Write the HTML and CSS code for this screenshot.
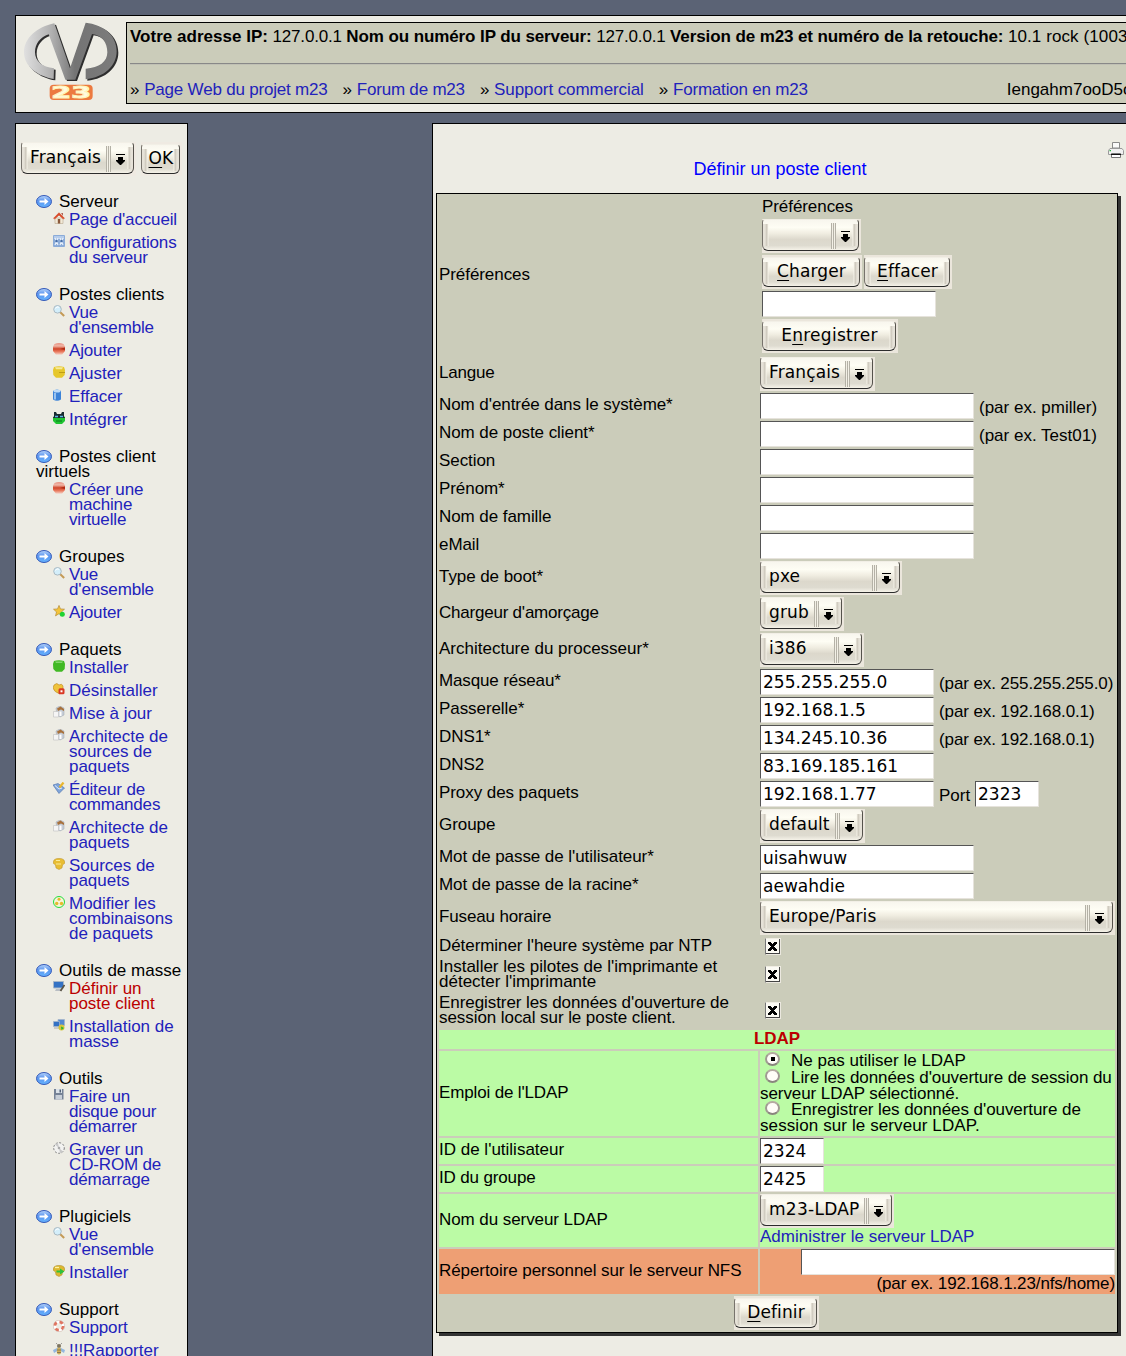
FILE: index.html
```html
<!DOCTYPE html>
<html lang="fr">
<head>
<meta charset="utf-8">
<title>m23 - Définir un poste client</title>
<link rel="stylesheet" href="styles.css">
</head>
<body>
<svg class="defs" width="0" height="0" aria-hidden="true">
  <defs>
    <linearGradient id="g-blue" x1="0" y1="0" x2="0" y2="1"><stop offset="0" stop-color="#b8d6fb"/><stop offset=".45" stop-color="#5b94ee"/><stop offset="1" stop-color="#64b4ff"/></linearGradient>
    <linearGradient id="g-red" x1="0" y1="0" x2="0" y2="1"><stop offset="0" stop-color="#e89080"/><stop offset=".25" stop-color="#f0b8a8"/><stop offset=".5" stop-color="#d04428"/><stop offset=".75" stop-color="#ea7c60"/><stop offset="1" stop-color="#f4d4c8"/></linearGradient>
    <linearGradient id="g-gray" x1="0" y1="0" x2="1" y2="0"><stop offset="0" stop-color="#e0e0e0"/><stop offset=".3" stop-color="#b0b0b0"/><stop offset=".55" stop-color="#747474"/><stop offset="1" stop-color="#7c7c7c"/></linearGradient>
    <symbol id="i-arrow" viewBox="0 0 16 13"><ellipse cx="8" cy="6.5" rx="7.5" ry="6" fill="url(#g-blue)" stroke="#3459b8"/><path d="M3.500 5.500h5V3l4 3.500-4 3.500V7.500h-5z" fill="#fff"/></symbol>
    <symbol id="i-home" viewBox="0 0 12 12"><path d="M2 6h8v5.500H2z" fill="#f2ead8" stroke="#b8aa90" stroke-width=".6"/><path d="M.6 6.300 6 .8l5.400 5.500-1.200.5L6 3 1.800 6.800z" fill="#d84a2a" stroke="#d84a2a" stroke-width=".7"/><path d="M8.200 1h1.600v3z" fill="#a04030"/><path d="M4.800 7h2.400v4.500H4.800z" fill="#8a5a3c"/></symbol>
    <symbol id="i-config" viewBox="0 0 12 12"><rect width="12" height="12" rx="1" fill="#8aabd8"/><path d="M1 1h10v3H1z" fill="#b5cceb"/><path d="m2 3 3 7M7 3l3 7M5 3 2 10M10 3 7 10" stroke="#e9f1fb" stroke-width="1.200"/><circle cx="3.500" cy="6" r="1.200" fill="#456da8"/><circle cx="8.500" cy="6" r="1.200" fill="#456da8"/></symbol>
    <symbol id="i-lens" viewBox="0 0 12 12"><path d="m7 7 4.200 4" stroke="#c49a55" stroke-width="2"/><circle cx="4.500" cy="4.300" r="3.800" fill="#d3eefa" stroke="#a9b9c2"/><path d="M2.500 3.600a2.500 2.500 0 0 1 3.500-1.400" stroke="#fff" fill="none"/></symbol>
    <symbol id="i-red" viewBox="0 0 12 12"><path d="M1.500 1Q6-1 10.500 1L12 3.500v4.500l-3 3.700H3L0 8V3.500z" fill="url(#g-red)"/><path d="m7 6 5-1.500V7z" fill="#b02c14"/></symbol>
    <symbol id="i-yellow" viewBox="0 0 12 12"><path d="M1 1Q6-.6 11 1l1 3-.3 5L9 11.700H3L.3 9 0 4z" fill="#e6c72c"/><path d="M2 1.200h8l-1 2H3z" fill="#f6ea98"/><path d="M6 6.500h6" stroke="#bf9d17"/></symbol>
    <symbol id="i-blue" viewBox="0 0 12 12"><path d="M0 2q4-3 8 0v8.500q-4 2.500-8 0z" fill="#3c83d8"/><ellipse cx="4" cy="2" rx="3.500" ry="1.500" fill="#bfdcf8"/><path d="M2 4v6.500" stroke="#b8d8f8" stroke-width="1.500"/></symbol>
    <symbol id="i-monster" viewBox="0 0 12 12"><path d="M0 5h12v4l-3 3H3L0 9z" fill="#1fc431"/><path d="M1 0h2l1 2h4l1-2h2v4l1 2H0l1-2z" fill="#172b30"/><path d="M2 4.500h3M7 4.500h3" stroke="#5db9e6" stroke-width="1.300"/><path d="M3 9h6" stroke="#0d771b"/></symbol>
    <symbol id="i-star" viewBox="0 0 12 12"><path d="m6 .4 1.500 3.500 4 .3-3 2.600 1 4L6 8.700l-3.500 2.200 1-4L.5 4.200l4-.3z" fill="#f3c43b" stroke="#ad822a" stroke-width=".6"/><circle cx="9.300" cy="9.200" r="2.500" fill="#20d333"/></symbol>
    <symbol id="i-green" viewBox="0 0 12 12"><path d="M1 1Q6-.6 11 1l1 3-.3 5L9 11.700H3L.3 9 0 4z" fill="#41b924"/><path d="M2 1.500h8l-1 1.500H3z" fill="#83d56d"/></symbol>
    <symbol id="i-uninstall" viewBox="0 0 12 12"><path d="M1 2q3-3 5 0 3-2 4 1v4L7 11Q1 9 0 5z" fill="#efc33b" stroke="#b98523" stroke-width=".6"/><rect x="5.500" y="5.300" width="6" height="6" rx="1.500" fill="#d93824"/><path d="M7.500 7.300h2v2h-2z" fill="#fff"/></symbol>
    <symbol id="i-package" viewBox="0 0 12 12"><path d="M3 2 7 0l4 2v7l-4 2-3-2z" fill="#c5ccd6" stroke="#9ca4ae" stroke-width=".5"/><path d="M4 2.500 7.500.6 11 3v2L8 3.500 5 5z" fill="#a8713b"/><path d="M.5 5.500h5v5.500H.5z" fill="#f5f5f5" stroke="#c0c0c0" stroke-width=".6"/><path d="M6.500 5.500h2V10h-2z" fill="#fff"/></symbol>
    <symbol id="i-edit" viewBox="0 0 12 12"><path d="M0 3 5 1.500 11.500 6 6 11.500z" fill="#7fa5da" stroke="#496da7" stroke-width=".6"/><path d="M2 3.500 6 7l3-1" stroke="#dceaff" fill="none"/><path d="M10.500.5 6.500 5.500" stroke="#e9b52c" stroke-width="2.200"/></symbol>
    <symbol id="i-shield" viewBox="0 0 12 12"><path d="M1 2q2-2 5-1.500Q9 0 11 2l1 3-2.500 2L9 10l-3 1.500L3 10l-.5-3L0 5z" fill="#e8bd33" stroke="#b88e25" stroke-width=".5"/><path d="M3 2.500h4M3 6h5" stroke="#faec9a" stroke-width="1.200"/></symbol>
    <symbol id="i-combo" viewBox="0 0 12 12"><circle cx="6" cy="6" r="5.500" fill="#f6f4da" stroke="#23dd3b"/><circle cx="6" cy="3.300" r="1.500" fill="#e5b92c"/><circle cx="3.700" cy="7.500" r="1.700" fill="#e5b92c"/><circle cx="8.500" cy="7.500" r="1.700" fill="#e5b92c"/></symbol>
    <symbol id="i-pcedit" viewBox="0 0 12 12"><path d="M.5.5h10v6.500H.5z" fill="#3472c4" stroke="#a7b6c7"/><path d="M3 8h5l1 2H2z" fill="#b9bec4"/><path d="m11.500 4-4 6" stroke="#5c5548" stroke-width="1.800"/></symbol>
    <symbol id="i-pcinst" viewBox="0 0 12 12"><path d="M5 .5h6.500v6H5z" fill="#5289d1" stroke="#a3b5ca" stroke-width=".8"/><path d="M.5 2.500h6v5h-6z" fill="#3472c4" stroke="#a3b5ca" stroke-width=".8"/><path d="M1 9h5" stroke="#aaa"/><circle cx="8.500" cy="8.500" r="3" fill="#d7c53a"/><path d="M8 7.500 11 9l-2.500 2z" fill="#25b531"/></symbol>
    <symbol id="i-floppy" viewBox="0 0 12 12"><path d="M1 0h9.500v10.500H1z" fill="#758296"/><path d="M3 0h6v4H3z" fill="#dbe2e9"/><path d="M2.500 6H9v4.500H2.500z" fill="#c8cfd8"/><path d="M6.500.5h1.500v3H6.500z" fill="#526078"/></symbol>
    <symbol id="i-cd" viewBox="0 0 12 12"><circle cx="6" cy="6" r="5.300" fill="#f2f2f0" stroke="#7e7e7e" stroke-dasharray="2 1.500"/><path d="M6 6 2 2.500A5 5 0 0 1 5 1zM6 6l4 3.500A5 5 0 0 1 7 11z" fill="#c8c8c8"/><circle cx="6" cy="6" r="1.300" fill="#aaa"/></symbol>
    <symbol id="i-plugin" viewBox="0 0 12 12"><path d="M1 2q2-2 5-1.500Q9 0 11 2l1 3-2.500 2L9 10l-3 1.500L3 10l-.5-3L0 5z" fill="#ddb830" stroke="#a98626" stroke-width=".5"/><path d="M2 2.500h4" stroke="#fff3a5" stroke-width="1.300"/><path d="M3.500 5.500h3.500v-2l4.500 3-4.500 3v-2H3.500z" fill="#2fc13b"/></symbol>
    <symbol id="i-support" viewBox="0 0 12 12"><circle cx="6" cy="6" r="4.200" fill="none" stroke="#fff" stroke-width="3"/><circle cx="6" cy="6" r="4.200" fill="none" stroke="#e07460" stroke-width="2.800" stroke-dasharray="3.600 3"/><circle cx="6" cy="6" r="5.700" fill="none" stroke="#c9aaa0" stroke-width=".5"/></symbol>
    <symbol id="i-bug" viewBox="0 0 12 12"><path d="M6 4 0 7l1 3 5-3 5 3 1-3z" fill="#93b7df"/><ellipse cx="6" cy="3" rx="2" ry="2" fill="#7c745e"/><ellipse cx="6" cy="8" rx="2.200" ry="3.600" fill="#d4b058"/><path d="M4 7h4M4 9.500h4" stroke="#8a7a50"/><path d="M4.500 1.500 3 0M7.500 1.500 9 0" stroke="#777" stroke-width=".7"/></symbol>
    <symbol id="i-drop" viewBox="0 0 9 11"><path d="M0 0h9v1H0zM2 3h5v3h2v1L5 11H4L0 7V6h2z" fill="#000"/></symbol>
    <symbol id="i-check" viewBox="0 0 9 9"><path d="M0 0h3v1h1v1h1V1h1V0h3v2H8v1H7v1H6v1h1v1h1v1h1v2H6V8H5V7H4v1H3v1H0V7h1V6h1V5h1V4H2V3H1V2H0z" fill="#000"/></symbol>
  </defs>
</svg>

<div class="page">
  <header class="top">
    <svg class="logo" viewBox="66 66 294 246" width="98" height="82" role="img" aria-label="m23">
      <path transform="translate(5 4)" fill="#2e2e2e" d="M160 70C108 80 69 115 69 157c0 44 44 73 89 80l1-32c-36-4-57-22-57-48 0-26 16-45 41-54l50 136h30l50-137c30 3 46 26 46 55 0 28-24 47-65 49v32c56-6 93-40 93-84 0-50-41-80-93-86l-47 137z"/>
      <path fill="url(#g-gray)" d="M160 70C108 80 69 115 69 157c0 44 44 73 89 80l1-32c-36-4-57-22-57-48 0-26 16-45 41-54l50 136h30l50-137c30 3 46 26 46 55 0 28-24 47-65 49v32c56-6 93-40 93-84 0-50-41-80-93-86l-47 137z"/>
      <rect x="146" y="254" width="129" height="46" rx="12" fill="#ec7a40"/>
      <text class="logo-num" x="151" y="295" textLength="119" lengthAdjust="spacingAndGlyphs">23</text>
    </svg>
    <div class="info">
      <p class="info-line"><b class="ip">Votre adresse IP:</b> 127.0.0.1 <b>Nom ou numéro IP du serveur:</b> 127.0.0.1 <b>Version de m23 et numéro de la retouche:</b> <span class="version">10.1 rock (1003)</span></p>
      <div class="rule"></div>
      <div class="links">
        <span>» <a>Page Web du projet m23</a></span><span>» <a>Forum de m23</a></span><span>» <a class="wide">Support commercial</a></span><span>» <a>Formation en m23</a></span>
        <span class="token">Iengahm7ooD5o</span>
      </div>
    </div>
  </header>

  <div class="columns">
    <nav class="side">
      <div class="lang">
        <div class="ctl select w115"><span>Français</span><i class="grip"></i><svg class="drop"><use href="#i-drop"/></svg></div>
        <div class="ctl btn w41"><span><u>O</u>K</span></div>
      </div>
      <section><h2><svg><use href="#i-arrow"/></svg>Serveur</h2>
        <a class="tight"><svg><use href="#i-home"/></svg>Page d'accueil</a>
        <a class="tight"><svg><use href="#i-config"/></svg>Configurations<br>du serveur</a></section>
      <section><h2><svg><use href="#i-arrow"/></svg>Postes clients</h2>
        <a class="tight"><svg><use href="#i-lens"/></svg>Vue<br>d'ensemble</a>
        <a class="tight"><svg><use href="#i-red"/></svg>Ajouter</a>
        <a><svg><use href="#i-yellow"/></svg>Ajuster</a>
        <a><svg><use href="#i-blue"/></svg>Effacer</a>
        <a><svg><use href="#i-monster"/></svg>Intégrer</a></section>
      <section><h2><svg><use href="#i-arrow"/></svg>Postes client<br>virtuels</h2>
        <a class="tight"><svg><use href="#i-red"/></svg>Créer une<br>machine<br>virtuelle</a></section>
      <section><h2><svg><use href="#i-arrow"/></svg>Groupes</h2>
        <a class="tight"><svg><use href="#i-lens"/></svg>Vue<br>d'ensemble</a>
        <a class="tight"><svg><use href="#i-star"/></svg>Ajouter</a></section>
      <section><h2><svg><use href="#i-arrow"/></svg>Paquets</h2>
        <a><svg><use href="#i-green"/></svg>Installer</a>
        <a><svg><use href="#i-uninstall"/></svg>Désinstaller</a>
        <a><svg><use href="#i-package"/></svg>Mise à jour</a>
        <a><svg><use href="#i-package"/></svg>Architecte de<br>sources de<br>paquets</a>
        <a class="tight"><svg><use href="#i-edit"/></svg>Éditeur de<br>commandes</a>
        <a><svg><use href="#i-package"/></svg>Architecte de<br>paquets</a>
        <a><svg><use href="#i-shield"/></svg>Sources de<br>paquets</a>
        <a><svg><use href="#i-combo"/></svg>Modifier les<br>combinaisons<br>de paquets</a></section>
      <section><h2><svg><use href="#i-arrow"/></svg>Outils de masse</h2>
        <a class="current"><svg><use href="#i-pcedit"/></svg>Définir un<br>poste client</a>
        <a><svg><use href="#i-pcinst"/></svg>Installation de<br>masse</a></section>
      <section><h2><svg><use href="#i-arrow"/></svg>Outils</h2>
        <a class="tight"><svg><use href="#i-floppy"/></svg>Faire un<br>disque pour<br>démarrer</a>
        <a class="tight"><svg><use href="#i-cd"/></svg>Graver un<br>CD-ROM de<br>démarrage</a></section>
      <section><h2><svg><use href="#i-arrow"/></svg>Plugiciels</h2>
        <a class="tight"><svg><use href="#i-lens"/></svg>Vue<br>d'ensemble</a>
        <a><svg><use href="#i-plugin"/></svg>Installer</a></section>
      <section><h2><svg><use href="#i-arrow"/></svg>Support</h2>
        <a class="tight"><svg><use href="#i-support"/></svg>Support</a>
        <a><svg><use href="#i-bug"/></svg>!!!Rapporter</a></section>
    </nav>

    <main class="main">
      <div class="print">
        <svg width="16" height="16" viewBox="0 0 16 16"><path d="M4.500.5h7V6h-7z" fill="#fafafa" stroke="#8a8a8a"/><path d="M2 6.500h12l1.500 2v4H.5v-4z" fill="#f1f1f1" stroke="#9a9a9a"/><path d="M3.500 11.500h9v4h-9z" fill="#fff" stroke="#777"/><path d="M3 12.500h10" stroke="#111"/><path d="M1.500 8h1.500v1.200H1.500z" fill="#27b33a"/></svg>
      </div>
      <h1>Définir un poste client</h1>

      <div class="form">
        <div class="row prefs">
          <div class="label">Préférences</div>
          <div class="stack">
            <p>Préférences</p>
            <div class="ctl select w99"><span></span><i class="grip"></i><svg class="drop"><use href="#i-drop"/></svg></div>
            <div class="pair"><div class="ctl btn w100"><span><u>C</u>harger</span></div><div class="ctl btn w88"><span><u>E</u>ffacer</span></div></div>
            <input class="w174" type="text">
            <div class="ctl btn loose w136"><span>E<u>n</u>registrer</span></div>
          </div>
        </div>
        <div class="row sel"><div class="label tighter">Langue</div><div class="field"><div class="ctl select w115"><span>Français</span><i class="grip"></i><svg class="drop"><use href="#i-drop"/></svg></div></div></div>
        <div class="row"><div class="label">Nom d'entrée dans le système*</div><div class="field"><input class="w214" type="text"><em class="wide">(par ex. pmiller)</em></div></div>
        <div class="row"><div class="label">Nom de poste client*</div><div class="field"><input class="w214" type="text"><em class="wide">(par ex. Test01)</em></div></div>
        <div class="row"><div class="label">Section</div><div class="field"><input class="w214" type="text"></div></div>
        <div class="row"><div class="label">Prénom*</div><div class="field"><input class="w214" type="text"></div></div>
        <div class="row"><div class="label">Nom de famille</div><div class="field"><input class="w214" type="text"></div></div>
        <div class="row"><div class="label">eMail</div><div class="field"><input class="w214" type="text"></div></div>
        <div class="row sel"><div class="label">Type de boot*</div><div class="field"><div class="ctl select w142"><span>pxe</span><i class="grip"></i><svg class="drop"><use href="#i-drop"/></svg></div></div></div>
        <div class="row sel"><div class="label tighter">Chargeur d'amorçage</div><div class="field"><div class="ctl select w84"><span>grub</span><i class="grip"></i><svg class="drop"><use href="#i-drop"/></svg></div></div></div>
        <div class="row sel"><div class="label wide">Architecture du processeur*</div><div class="field"><div class="ctl select w104"><span>i386</span><i class="grip"></i><svg class="drop"><use href="#i-drop"/></svg></div></div></div>
        <div class="row"><div class="label tight">Masque réseau*</div><div class="field"><input class="w174" type="text" value="255.255.255.0"><em>(par ex. 255.255.255.0)</em></div></div>
        <div class="row"><div class="label">Passerelle*</div><div class="field"><input class="w174" type="text" value="192.168.1.5"><em>(par ex. 192.168.0.1)</em></div></div>
        <div class="row"><div class="label">DNS1*</div><div class="field"><input class="w174" type="text" value="134.245.10.36"><em>(par ex. 192.168.0.1)</em></div></div>
        <div class="row"><div class="label">DNS2</div><div class="field"><input class="w174" type="text" value="83.169.185.161"></div></div>
        <div class="row"><div class="label">Proxy des paquets</div><div class="field"><input class="w174" type="text" value="192.168.1.77"><em class="port wide">Port</em><input class="w64" type="text" value="2323"></div></div>
        <div class="row sel"><div class="label">Groupe</div><div class="field"><div class="ctl select w105"><span>default</span><i class="grip"></i><svg class="drop"><use href="#i-drop"/></svg></div></div></div>
        <div class="row"><div class="label">Mot de passe de l'utilisateur*</div><div class="field"><input class="w214" type="text" value="uisahwuw"></div></div>
        <div class="row"><div class="label">Mot de passe de la racine*</div><div class="field"><input class="w214" type="text" value="aewahdie"></div></div>
        <div class="row sel"><div class="label tight">Fuseau horaire</div><div class="field"><div class="ctl select w355"><span>Europe/Paris</span><i class="grip"></i><svg class="drop"><use href="#i-drop"/></svg></div></div></div>
        <div class="row ntp"><div class="label">Déterminer l'heure système par NTP</div><div class="field"><span class="check"><svg><use href="#i-check"/></svg></span></div></div>
        <div class="row two"><div class="label wide">Installer les pilotes de l'imprimante et<br>détecter l'imprimante</div><div class="field"><span class="check"><svg><use href="#i-check"/></svg></span></div></div>
        <div class="row two last"><div class="label"><span>Enregistrer les données d'ouverture de<br>session local sur le poste client.</span></div><div class="field"><span class="check"><svg><use href="#i-check"/></svg></span></div></div>
        <div class="ldap-head">LDAP</div>
        <div class="row green usage"><div class="label tight">Emploi de l'LDAP</div>
          <div class="radios">
            <p class="first wide"><span class="radio on"></span>Ne pas utiliser le LDAP</p>
            <p><span class="radio"></span>Lire les données d'ouverture de session du</p>
            <p>serveur LDAP sélectionné.</p>
            <p><span class="radio"></span>Enregistrer les données d'ouverture de</p>
            <p class="loose">session sur le serveur LDAP.</p>
          </div></div>
        <div class="row green"><div class="label wide">ID de l'utilisateur</div><div class="field"><input class="w64" type="text" value="2324"></div></div>
        <div class="row green"><div class="label tight">ID du groupe</div><div class="field"><input class="w64" type="text" value="2425"></div></div>
        <div class="row green server"><div class="label">Nom du serveur LDAP</div><div class="field"><div class="ctl select loose w134"><span>m23-LDAP</span><i class="grip"></i><svg class="drop"><use href="#i-drop"/></svg></div><a class="wide">Administrer le serveur LDAP</a></div></div>
        <div class="row nfs"><div class="label">Répertoire personnel sur le serveur NFS</div><div class="field"><input class="w314" type="text"><em>(par ex. 192.168.1.23/nfs/home)</em></div></div>
        <div class="submit"><div class="ctl btn w85"><span><u>D</u>efinir</span></div></div>
      </div>
    </main>
  </div>
</div>
</body>
</html>
```
FILE: styles.css
```css
* { box-sizing: border-box; }
html, body { margin: 0; }
body {
  height: 1356px;
  overflow: hidden;
  background: #5b6375;
  color: #000;
  font: 17px/15px "Liberation Sans", Arial, sans-serif;
}
h1, h2, p { margin: 0; font-weight: normal; }
em { font-style: normal; }
a { color: #2222bb; text-decoration: none; }
.defs { display: block; position: absolute; }
.page { padding: 15px 0 0 15px; height: 1356px; overflow: hidden; }

/* Header */
.top {
  display: flex;
  width: 1245px;
  height: 98px;
  padding: 6px 0 8px 7px;
  background: #edece4;
  border: 1px solid #000;
}
.logo { flex: none; margin-right: 5px; }
.logo-num {
  font: bold 48px "DejaVu Sans", sans-serif;
  fill: #fffbe0;
  stroke: #fff3b8;
  stroke-width: 3px;
}
.info {
  flex: none;
  width: 1150px;
  height: 82px;
  padding: 6px 3px 0;
  background: #cbccba;
  border: 1px solid #000;
  white-space: nowrap;
}
.info-line { height: 15px; letter-spacing: -0.18px; }
.info-line b { letter-spacing: -0.1px; }
.info-line b.ip { letter-spacing: 0.02px; }
.info-line .version { letter-spacing: 0.1px; }
.rule { height: 2px; margin: 19px 0 17px; border-top: 1px solid #888; border-bottom: 1px solid #c0c0b4; }
.links { display: flex; }
.links span { margin-right: 15px; }
.links a { letter-spacing: -0.2px; }
.links a.wide { letter-spacing: -0.08px; }
.links .token { margin: 0 0 0 184px; }

/* Columns */
.columns { display: flex; align-items: flex-start; gap: 244px; margin-top: 10px; }
.side, .main { flex: none; height: 1300px; background: #edece4; border: 1px solid #000; white-space: nowrap; }
.side { width: 173px; padding: 18px 0 0 5px; overflow: hidden; letter-spacing: -0.02px; }
.lang { display: flex; gap: 5px; height: 52px; }
.side section { padding: 0 0 14px 15px; }
.side h2 { font-size: 17px; line-height: 15px; margin-bottom: 3px; letter-spacing: 0.03px; }
.side h2 svg { width: 16px; height: 13px; margin-right: 7px; vertical-align: -1px; }
.side a { display: block; position: relative; padding-left: 33px; margin-bottom: 8px; }
.side a svg { position: absolute; left: 17px; top: 0; width: 12px; height: 12px; }
.side a.current { color: #bb0000; }

.main { width: 810px; padding: 18px 3px 0; }
.print { height: 16px; padding-left: 672px; }
.print svg { display: block; }
h1 { width: 682px; margin: 1px 0 14px 3px; height: 20px; text-align: center; font-size: 18px; line-height: 20px; color: #0000ff; }

/* Form table */
.form {
  display: flex;
  flex-direction: column;
  gap: 2px;
  width: 682px;
  height: 1140px;
  padding: 2px;
  background: #cbccba;
  border: 1px solid #000;
  box-shadow: 3px 3px 0 #333;
  letter-spacing: -0.07px;
}
.row { display: grid; grid-template-columns: 319px 355px; column-gap: 2px; height: 26px; flex: none; }
.label { display: flex; align-items: center; padding-bottom: 3px; }
.field { display: flex; align-items: center; min-width: 0; }
.field em { padding: 3px 0 0 5px; letter-spacing: -0.11px; }
.field em.port { width: 41px; }
.row.prefs { height: 159px; }
.row.prefs .label { padding: 0 0 2px; }
.row.sel { height: 34px; }
.row.sel .label { padding-bottom: 4px; }
.row.ntp { height: 18px; }
.row.ntp .label { padding-bottom: 1px; }
.row.two { height: 34px; }
.row.two .label { padding: 0; }
.row.two.last { height: 35px; }
.row.two.last .label { padding-bottom: 2px; }
.stack { padding: 3px 0 0 2px; }
.stack p { height: 20px; }
.stack .ctl { margin-bottom: 2px; }
.stack input { display: block; margin-bottom: 2px; }
.pair { display: flex; gap: 2px; }

.ldap-head { flex: none; width: 676px; height: 19px; background: #bbfba5; color: #bb0000; font-weight: bold; line-height: 17px; text-align: center; }
.row.green > div { background: #bbfba5; }
.row.usage { height: 85px; }
.row.usage .label { padding: 0 0 2px; }
.radios { padding-top: 2px; line-height: 16px; }
.radios p { display: flex; height: 16px; }
.radios p.first { height: 17px; }
.radio {
  flex: none;
  width: 15px;
  height: 14px;
  margin: -1px 11px 0 5px;
  border: 2px solid;
  border-color: #b5aaa2 #a09a92 #8a857e #a09a92;
  border-radius: 50%;
  background: #fffdf8;
}
.radio.on { background: linear-gradient(#000, #000) 4px 3px / 4px 4px no-repeat #fffdf8; }
.row.server { height: 53px; }
.row.server .label { padding-bottom: 2px; }
.row.server .field { display: block; }
.row.server a { display: block; margin-top: 1px; }
.row.nfs { height: 45px; }
.row.nfs > div { background: #ee9f74; }
.row.nfs .label { padding-bottom: 2px; }
.row.nfs .field { flex-direction: column; align-items: flex-end; }
.row.nfs em { padding: 1px 0 0; }
.submit { padding-left: 295px; }

/* Per-text tracking */
.tight { letter-spacing: -0.15px; }
.tighter { letter-spacing: -0.22px; }
.wide, .field em.wide { letter-spacing: 0; }
.loose { letter-spacing: 0.1px; }

/* Widgets */
input {
  height: 26px;
  margin: 0;
  padding: 0 2px;
  background: #fff;
  border: 1px solid;
  border-color: #555 #e6e3dc #e6e3dc #555;
  border-radius: 0;
  color: #000;
  font: 17px "DejaVu Sans", sans-serif;
  outline: 0;
}
.ctl {
  display: flex;
  position: relative;
  height: 34px;
  padding: 0 2px 2px 0;
  background: #ebe6dc;
  font: 17px/27px "DejaVu Sans", sans-serif;
  letter-spacing: 0.12px;
}
.ctl.loose { letter-spacing: 0.27px; }
.ctl::before {
  content: "";
  position: absolute;
  inset: 0 2px 2px 0;
  border: 1px solid;
  border-color: #f2efe6 #55524c #2c2c2c #77736c;
  border-radius: 3px 4px 6px 6px;
  background:
    linear-gradient(90deg, #e6e2d8 2px, #c9c4b8 4px, #f7f4ea 5px, transparent 6px, transparent calc(100% - 6px), #f7f4ea calc(100% - 5px), #c9c4b8 calc(100% - 4px), #e6e2d8 calc(100% - 2px)) 0 4px / 100% 22px no-repeat,
    linear-gradient(#f8f6ee 0, #fefdf4 25%, #f0ede1 45%, #dcd8cc 65%, #dedbd0 85%, #f5f2e8);
}
.btn::before { top: 2px; }
.ctl span { position: relative; white-space: nowrap; }
.select { padding-left: 9px; padding-top: 2px; }
.btn { justify-content: center; padding: 3px 1px 2px 0; }
.ctl u { text-decoration-thickness: 1px; text-underline-offset: 3px; text-decoration-skip-ink: none; }
.grip {
  position: absolute;
  right: 25px;
  top: 4px;
  width: 5px;
  height: 26px;
  background: repeating-linear-gradient(90deg, #b4b1a6 0 1px, #f3f0e6 1px 2px);
}
.drop { position: absolute; right: 11px; top: 12px; width: 9px; height: 11px; }
.lang .ctl { background: #efeae2; }
.check {
  width: 16px;
  height: 17px;
  margin-left: 5px;
  padding: 3px 2px;
  background: #fbfaf3;
  border: 1px solid;
  border-color: #efece2 #ebe8df #ebe8df #777;
  box-shadow: inset -1px -1px 0 #444;
}
.check svg { display: block; width: 9px; height: 9px; }

.w41 { width: 41px; } .w64 { width: 64px; } .w84 { width: 84px; } .w85 { width: 85px; }
.w88 { width: 88px; } .w99 { width: 99px; } .w100 { width: 100px; } .w104 { width: 104px; }
.w105 { width: 105px; } .w115 { width: 115px; } .w134 { width: 134px; } .w136 { width: 136px; }
.w142 { width: 142px; } .w174 { width: 174px; } .w214 { width: 214px; } .w314 { width: 314px; }
.w355 { width: 355px; }
```
